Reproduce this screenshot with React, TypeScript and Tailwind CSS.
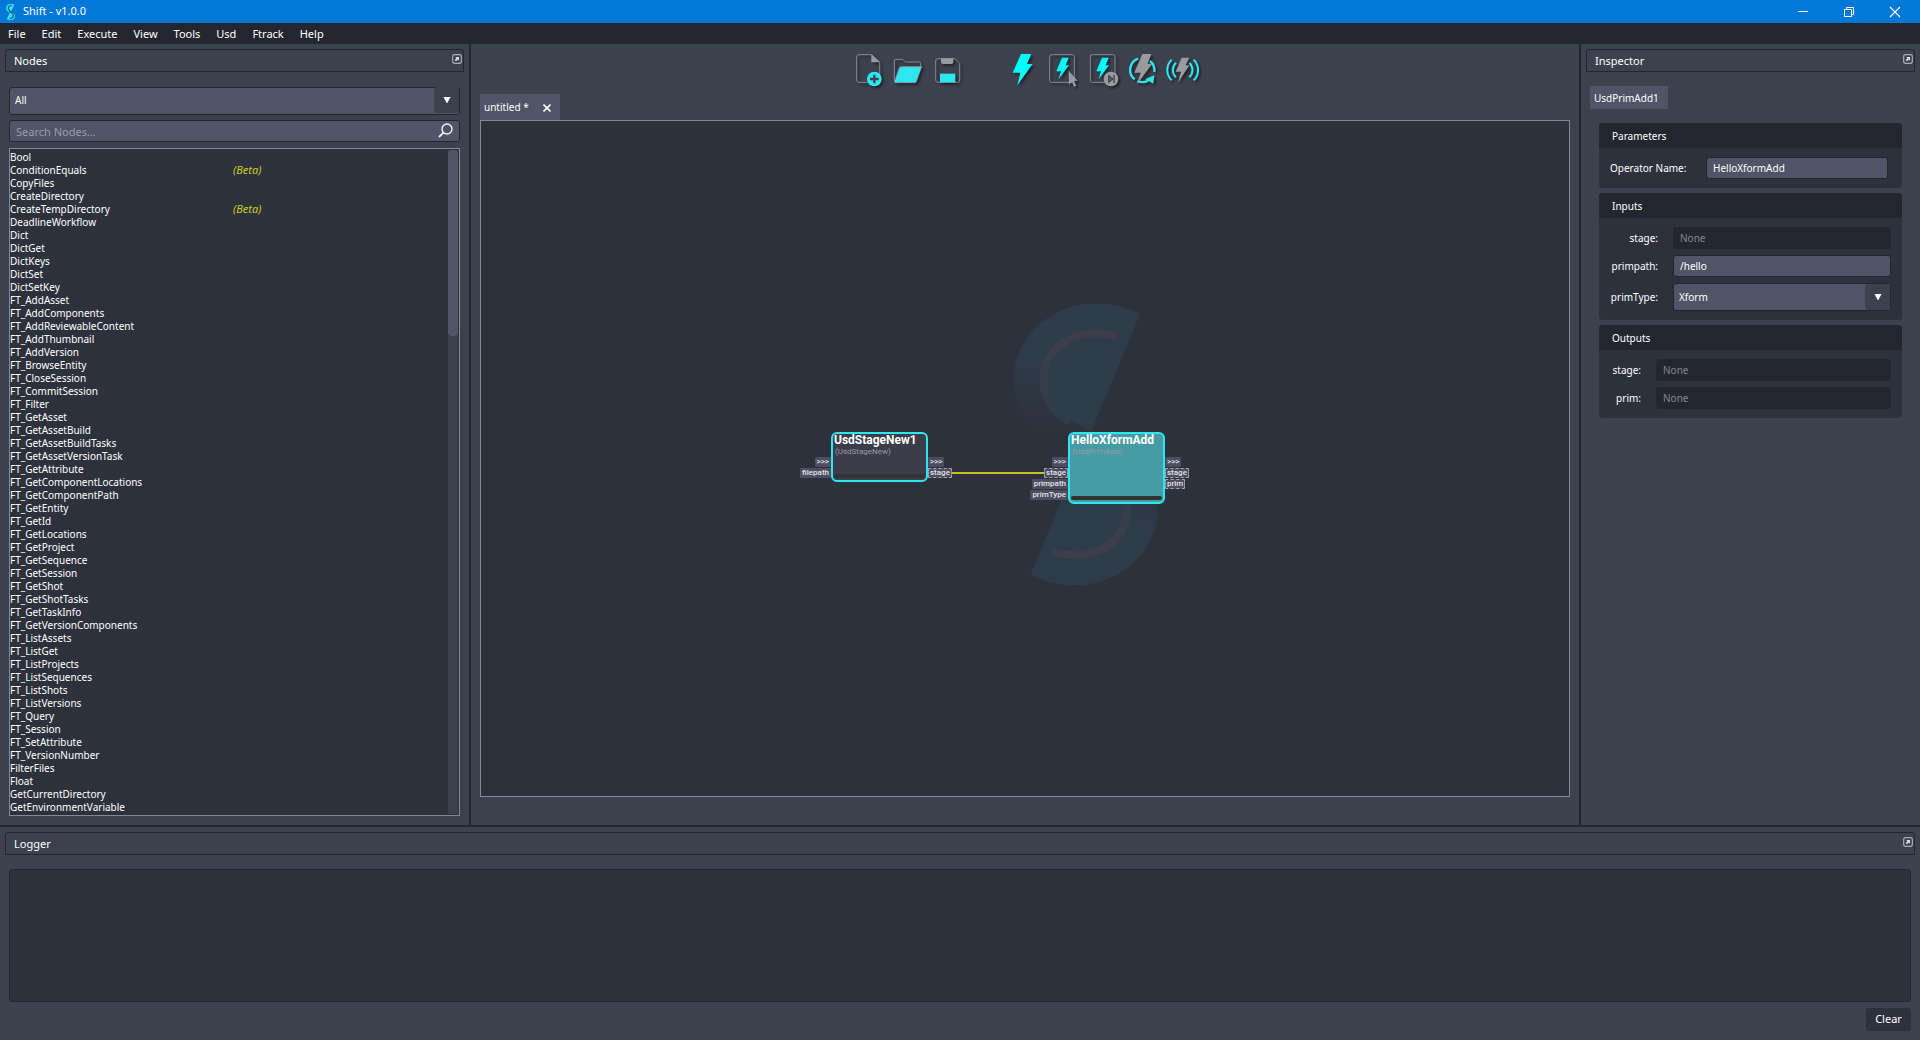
import React from 'react';

const MENUS = ['File', 'Edit', 'Execute', 'View', 'Tools', 'Usd', 'Ftrack', 'Help'];

const NODE_TYPES = [
  'Bool', 'ConditionEquals', 'CopyFiles', 'CreateDirectory', 'CreateTempDirectory', 'DeadlineWorkflow',
  'Dict', 'DictGet', 'DictKeys', 'DictSet', 'DictSetKey', 'FT_AddAsset', 'FT_AddComponents',
  'FT_AddReviewableContent', 'FT_AddThumbnail', 'FT_AddVersion', 'FT_BrowseEntity', 'FT_CloseSession',
  'FT_CommitSession', 'FT_Filter', 'FT_GetAsset', 'FT_GetAssetBuild', 'FT_GetAssetBuildTasks',
  'FT_GetAssetVersionTask', 'FT_GetAttribute', 'FT_GetComponentLocations', 'FT_GetComponentPath',
  'FT_GetEntity', 'FT_GetId', 'FT_GetLocations', 'FT_GetProject', 'FT_GetSequence', 'FT_GetSession',
  'FT_GetShot', 'FT_GetShotTasks', 'FT_GetTaskInfo', 'FT_GetVersionComponents', 'FT_ListAssets',
  'FT_ListGet', 'FT_ListProjects', 'FT_ListSequences', 'FT_ListShots', 'FT_ListVersions', 'FT_Query',
  'FT_Session', 'FT_SetAttribute', 'FT_VersionNumber', 'FilterFiles', 'Float', 'GetCurrentDirectory',
  'GetEnvironmentVariable',
];

const BETA = new Set(['ConditionEquals', 'CreateTempDirectory']);

function TitleBar() {
  return (
    <header className="flex h-[23px] shrink-0 items-center bg-[#0078d7] pr-[2px] pl-[5px] text-white">
      <svg width="11" height="18" viewBox="0 0 33 54" aria-hidden="true">
        <path d="M28 5 C14 -1 3 6 3 17 C4 24 11 27 17 28 Z" fill="#2ee6f0" />
        <path d="M5 49 C18 55 30 49 30 38 C29 30 22 27 16 26 Z" fill="#2ee6f0" />
        <path d="M20 8 C10 8 7 16 12 21 L24 34 C27 40 24 46 14 47" fill="none" stroke="#1c5a86" strokeWidth="4" />
      </svg>
      <h1 className="ml-[7px] flex-1 text-[11px]">Shift - v1.0.0</h1>
      <button aria-label="Minimize" className="flex h-full w-[46px] items-center justify-center">
        <svg width="12" height="12" viewBox="0 0 12 12" stroke="#fff" fill="none"><path d="M1 5.5H11" /></svg>
      </button>
      <button aria-label="Restore" className="flex h-full w-[46px] items-center justify-center">
        <svg width="12" height="12" viewBox="0 0 12 12" stroke="#fff" fill="none">
          <path d="M1.500 3.500H8.500V10.500H1.500ZM3.500 3.500V1.500H10.500V8.500H8.500" />
        </svg>
      </button>
      <button aria-label="Close" className="flex h-full w-[46px] items-center justify-center">
        <svg width="12" height="12" viewBox="0 0 12 12" stroke="#fff" strokeWidth="1.2" fill="none"><path d="M1 1L11 11M11 1L1 11" /></svg>
      </button>
    </header>
  );
}

function DockHeader({ title }: { title: string }) {
  return (
    <div className="flex h-[23px] shrink-0 items-center rounded-t-[3px] border border-[#23262f] pt-[2px] pr-px pl-2">
      <h2 className="flex-1 text-[11px]">{title}</h2>
      <button aria-label={`Float ${title}`} className="mb-[5px]">
        <svg width="10" height="10" viewBox="0 0 30 30" fill="none">
          <rect x="2" y="2" width="26" height="26" rx="6" stroke="#a9acb6" strokeWidth="3.500" />
          <path d="M10 9H21V20L17.500 16.500L12 22L8 18L13.500 12.500Z" fill="#dfe1e6" />
        </svg>
      </button>
    </div>
  );
}

function Combo({ label, id, value }: { label?: string; id: string; value: string }) {
  return (
    <div className="relative h-7 min-w-0 flex-1">
      <select
        id={id}
        aria-label={label}
        className="h-full w-full appearance-none rounded-[3px] border border-[#23262f] bg-[#4f5466] pl-[5px] text-[10px] text-white"
      >
        <option>{value}</option>
      </select>
      <span className="pointer-events-none absolute inset-y-px right-px flex w-[25px] items-center justify-center rounded-[3px] bg-[#3c414e]">
        <svg width="8" height="8" viewBox="0 0 8 8"><path d="M0.500 1H7.500L4 7.500Z" fill="#fff" /></svg>
      </span>
    </div>
  );
}

function NodesPanel() {
  return (
    <section className="flex w-[469px] shrink-0 flex-col pt-[5px] pr-[5px] pb-[9px] pl-[5px]">
      <DockHeader title="Nodes" />
      <div className="mx-1 mt-[14px] flex min-h-0 flex-1 flex-col">
        <div className="flex shrink-0"><Combo id="category" label="Category" value="All" /></div>
        <div className="relative mt-[6px] flex h-[22px] shrink-0">
          <input
            type="text"
            aria-label="Search Nodes"
            placeholder="Search Nodes..."
            className="block h-full w-full rounded-[3px] border border-[#23262f] bg-[#4f5466] px-[6px] text-[11px] leading-[16px] text-white placeholder:text-[#9a9da8]"
          />
          <svg className="absolute top-[3px] right-[7px]" width="15" height="15" viewBox="0 0 15 15" fill="none" stroke="#f2f3f5" strokeWidth="1.400">
            <circle cx="9" cy="6" r="5" />
            <path d="M5.500 9.500L1 14" strokeWidth="1.800" />
          </svg>
        </div>
        <div className="mt-[6px] flex min-h-0 flex-1 border border-[#868991] bg-[#2d313b]">
          <ul className="h-full flex-1 overflow-hidden pt-[2px] text-[10px] leading-[13px]">
            {NODE_TYPES.map((name) => (
              <li key={name} className="flex h-[13px]">
                <span className="w-[223px]">{name}</span>
                {BETA.has(name) && <em className="-mt-px text-[11px] text-[#cdcd1e]">(Beta)</em>}
              </li>
            ))}
          </ul>
          <div className="my-px mr-px w-[10px] bg-[#3c404d]">
            <div className="h-[28%] rounded-[4px] bg-[#4f5466]" />
          </div>
        </div>
      </div>
    </section>
  );
}

const CYAN = '#2ee6f0';
const GRAY = '#999a9c';

function BadgeBolt() {
  return <path d="M60 23H80L71 46H81L50 88L57 64H43Z" fill="#00ffff" />;
}

const TOOLS: { name: string; art: React.ReactNode }[] = [
  {
    name: 'New',
    art: (
      <>
        <path d="M68 14H30Q23 14 23 21V90Q23 97 30 97H84Q92 97 92 90V36Z" fill="none" stroke="#85878c" strokeWidth="3" />
        <path d="M67 13L93 37H67Z" fill={GRAY} />
        <circle cx="76" cy="87" r="22" fill={CYAN} />
        <path d="M76 74V100M63 87H89" stroke="#3c404d" strokeWidth="7" />
      </>
    ),
  },
  {
    name: 'Open',
    art: (
      <>
        <path d="M16 94V33Q16 28 21 28H41L49 36H90Q95 36 95 41V50" fill="none" stroke="#85878c" strokeWidth="3" />
        <path d="M37 50H98L82 95Q81 98 77 98H20Q16 98 17 94L30 56Q32 50 37 50Z" fill={CYAN} stroke={GRAY} strokeWidth="2" />
      </>
    ),
  },
  {
    name: 'Save',
    art: (
      <>
        <path d="M27 26H78L92 40V90Q92 97 85 97H27Q20 97 20 90V33Q20 26 27 26Z" fill="none" stroke="#85878c" strokeWidth="3" />
        <path d="M36 25H73V36Q73 42 67 42H42Q36 42 36 36Z" fill={GRAY} />
        <rect x="33" y="71" width="46" height="26" fill={CYAN} />
      </>
    ),
  },
  { name: 'Execute', art: <path d="M57 12H88L75 42H92L46 106L55 68H32Z" fill="#00ffff" /> },
  {
    name: 'Execute selected',
    art: (
      <>
        <rect x="23" y="14" width="74" height="83" rx="6" fill="none" stroke="#85878c" strokeWidth="3" />
        <BadgeBolt />
        <path d="M80 62L107 92L96 93L103 107L96 110L90 96L81 104Z" fill={GRAY} />
      </>
    ),
  },
  {
    name: 'Execute to node',
    art: (
      <>
        <rect x="25" y="14" width="74" height="83" rx="6" fill="none" stroke="#85878c" strokeWidth="3" />
        <BadgeBolt />
        <circle cx="87" cy="87" r="22" fill={GRAY} />
        <path d="M80 76L93 87L80 98Z" fill="#55585f" stroke="#3c404d" strokeWidth="3" />
        <path d="M96 75V99" stroke="#3c404d" strokeWidth="4" />
      </>
    ),
  },
  {
    name: 'Restart',
    art: (
      <>
        <path d="M48 26A36 36 0 0 0 38 88M46 93A36 36 0 0 0 78 92M84 33A36 36 0 0 1 97 66" fill="none" stroke={CYAN} strokeWidth="7" />
        <path d="M97 76L70 88L94 101Z" fill={CYAN} />
        <path d="M61 12H88L77 41H91L45 103L56 68H37Z" fill={GRAY} />
      </>
    ),
  },
  {
    name: 'Live mode',
    art: (
      <>
        <path d="M42 38A30 30 0 0 0 42 82M29 29A43 43 0 0 0 29 91M82 38A30 30 0 0 1 82 82M95 29A43 43 0 0 1 95 91" fill="none" stroke={CYAN} strokeWidth="6" />
        <path d="M59 23H82L71 46H82L48 98L57 65H41Z" fill={GRAY} />
      </>
    ),
  },
];

function Toolbar() {
  return (
    <div role="toolbar" className="flex h-[50px] shrink-0 items-center justify-center pt-px">
      {TOOLS.map((tool, i) => (
        <button key={tool.name} aria-label={tool.name} className={i === 3 ? 'ml-[33px]' : ''}>
          <svg className="block drop-shadow-[2px_2px_1px_rgba(0,0,0,0.45)]" width="40" height="40" viewBox="0 0 120 120">
            {tool.art}
          </svg>
        </button>
      ))}
    </div>
  );
}

function WatermarkHalf() {
  return (
    <>
      <path d="M480 72C440 50 395 41 345 41C210 41 100 145 100 270C100 350 150 410 230 450L333 425Z" fill="url(#ring)" />
      <path d="M480 72L333 425C250 380 190 345 190 265C190 185 250 129 340 129Z" fill="#2e3c49" />
      <path d="M403 138C300 108 190 165 190 270C190 320 215 360 260 392" fill="none" stroke="url(#accent)" strokeWidth="23" strokeLinecap="round" />
    </>
  );
}

function Watermark() {
  return (
    <svg className="absolute top-[169px] left-[499px]" width="220" height="310" viewBox="0 0 660 930" aria-hidden="true">
      <defs>
        <linearGradient id="ring" gradientUnits="userSpaceOnUse" x1="0" y1="190" x2="0" y2="430">
          <stop offset="0" stopColor="#2e3c49" />
          <stop offset="1" stopColor="#2d313b" />
        </linearGradient>
        <linearGradient id="accent" gradientUnits="userSpaceOnUse" x1="0" y1="160" x2="0" y2="370">
          <stop offset="0" stopColor="#3d3d4a" />
          <stop offset="1" stopColor="#2e3c49" />
        </linearGradient>
      </defs>
      <WatermarkHalf />
      <g transform="rotate(180 316 463)"><WatermarkHalf /></g>
    </svg>
  );
}

type Port = { name: string; linked?: boolean };

function Ports({ ports, side }: { ports: Port[]; side: 'left' | 'right' }) {
  return (
    <ul
      className={
        side === 'left'
          ? 'absolute top-[23px] right-full mr-[2px] flex flex-col items-end gap-px'
          : 'absolute top-[23px] left-full ml-[2px] flex flex-col items-start gap-px'
      }
    >
      {ports.map((p) => (
        <li
          key={p.name}
          className={
            p.linked
              ? 'flex h-[10px] items-center rounded-[1px] border border-dashed border-[#a5a6ae] bg-[#4d4d62] px-px text-[8px] font-medium text-[#e2e2e4]'
              : 'flex h-[10px] items-center rounded-[1px] bg-[#4d4d62] px-[2px] text-[8px] font-medium text-[#e2e2e4]'
          }
        >
          {p.name}
        </li>
      ))}
    </ul>
  );
}

function GraphNode(props: { className: string; title: string; type: string; inputs: Port[]; outputs: Port[] }) {
  return (
    <div className={`absolute flex w-[97px] flex-col rounded-[6px] border-2 border-[#2ee6f0] font-['Roboto',sans-serif] ${props.className}`}>
      <strong className="pl-px text-[12px] leading-[13px] text-white">{props.title}</strong>
      <span className="pl-[2px] text-[8px] leading-[10px] text-[#9a9a9e]">{props.type}</span>
      <div className="mx-px mt-auto mb-[2px] h-1 rounded-[2px] bg-[#323235]" />
      <Ports ports={props.inputs} side="left" />
      <Ports ports={props.outputs} side="right" />
    </div>
  );
}

function Workspace() {
  return (
    <main className="flex min-w-0 flex-1 flex-col border-x-2 border-[#23262f] pr-[9px] pb-7 pl-[9px]">
      <Toolbar />
      <div className="flex h-[26px] w-20 shrink-0 items-center bg-[#4f5466] pt-px pl-1">
        <span className="flex-1 text-[10px]">untitled *</span>
        <button aria-label="Close tab" className="mr-[9px]">
          <svg width="8" height="8" viewBox="0 0 8 8" stroke="#fff" strokeWidth="1.600"><path d="M0.500 0.500L7.500 7.500M7.500 0.500L0.500 7.500" /></svg>
        </button>
      </div>
      <div className="relative min-h-0 flex-1 overflow-hidden border border-[#868991] bg-[#2d313b]">
        <Watermark />
        <div className="absolute top-[351px] left-[470px] h-[2px] w-[94px] bg-[#c5c41c]" />
        <GraphNode
          className="top-[311px] left-[350px] h-[50px] bg-[#3c3d4b]"
          title="UsdStageNew1"
          type="(UsdStageNew)"
          inputs={[{ name: '>>>' }, { name: 'filepath' }]}
          outputs={[{ name: '>>>' }, { name: 'stage', linked: true }]}
        />
        <GraphNode
          className="top-[311px] left-[587px] h-[72px] bg-[#469ca5]"
          title="HelloXformAdd"
          type="(UsdPrimAdd)"
          inputs={[{ name: '>>>' }, { name: 'stage', linked: true }, { name: 'primpath' }, { name: 'primType' }]}
          outputs={[{ name: '>>>' }, { name: 'stage', linked: true }, { name: 'prim', linked: true }]}
        />
      </div>
    </main>
  );
}

function Group({ title, className, children }: { title: string; className: string; children: React.ReactNode }) {
  return (
    <section className="overflow-hidden rounded-[4px] bg-[#2d313b] text-[10px]">
      <h3 className="flex h-[25px] items-center bg-[#23262f] pt-px pl-[13px]">{title}</h3>
      <div className={`flex flex-col gap-[6px] pt-[9px] pb-[9px] pl-[11px] ${className}`}>{children}</div>
    </section>
  );
}

function EmptyField({ id, label, labelWidth }: { id: string; label: string; labelWidth: string }) {
  return (
    <div className="flex items-center gap-[15px]">
      <label htmlFor={id} className={`text-right ${labelWidth}`}>{label}</label>
      <input id={id} type="text" disabled placeholder="None" className="h-[22px] min-w-0 flex-1 rounded-[3px] bg-[#23262f] px-[7px] text-[10px] placeholder:text-[#85868b]" />
    </div>
  );
}

function Inspector() {
  const field = 'h-[22px] min-w-0 flex-1 rounded-[3px] border border-[#23262f] bg-[#4f5466] px-[6px] text-[10px] text-white';
  return (
    <section className="flex w-[339px] shrink-0 flex-col px-[5px] pt-[5px]">
      <DockHeader title="Inspector" />
      <div className="mt-[14px] ml-1 flex h-[23px] w-[78px] items-center bg-[#4f5466] pt-px pl-1 text-[10px]">UsdPrimAdd1</div>
      <div className="mt-[14px] mr-[13px] ml-[13px] flex flex-col gap-[5px]">
        <Group title="Parameters" className="pr-[14px]">
          <div className="flex items-center gap-[18px]">
            <label htmlFor="op-name" className="w-[78px]">Operator Name:</label>
            <input id="op-name" type="text" defaultValue="HelloXformAdd" className={field} />
          </div>
        </Group>
        <Group title="Inputs" className="pr-[11px]">
          <EmptyField id="in-stage" label="stage:" labelWidth="w-12" />
          <div className="flex items-center gap-[15px]">
            <label htmlFor="in-path" className="w-12 text-right">primpath:</label>
            <input id="in-path" type="text" defaultValue="/hello" className={field} />
          </div>
          <div className="flex items-center gap-[15px]">
            <label htmlFor="in-type" className="w-12 text-right">primType:</label>
            <Combo id="in-type" value="Xform" />
          </div>
        </Group>
        <Group title="Outputs" className="pr-[11px]">
          <EmptyField id="out-stage" label="stage:" labelWidth="w-[31px]" />
          <EmptyField id="out-prim" label="prim:" labelWidth="w-[31px]" />
        </Group>
      </div>
    </section>
  );
}

function Logger() {
  return (
    <section className="flex shrink-0 flex-col border-t-2 border-[#23262f] px-[5px] pt-[5px] pb-[9px]">
      <DockHeader title="Logger" />
      <textarea aria-label="Log output" readOnly className="mx-1 mt-[14px] h-[133px] resize-none rounded-[3px] border border-[#23262f] bg-[#2d313b] p-1 text-[10px]" />
      <button className="mt-[6px] mr-1 h-[23px] w-[45px] self-end rounded-[4px] bg-[#2d313b] text-[11px]">Clear</button>
    </section>
  );
}

export default function App() {
  return (
    <div className="flex h-screen flex-col bg-[#3c414e] font-['Noto_Sans',sans-serif] text-white">
      <TitleBar />
      <nav className="flex h-[21px] shrink-0 items-center bg-[#23262f] pt-px text-[11px]">
        {MENUS.map((m) => (
          <button key={m} className="px-2">{m}</button>
        ))}
      </nav>
      <div className="flex min-h-0 flex-1">
        <NodesPanel />
        <Workspace />
        <Inspector />
      </div>
      <Logger />
    </div>
  );
}
